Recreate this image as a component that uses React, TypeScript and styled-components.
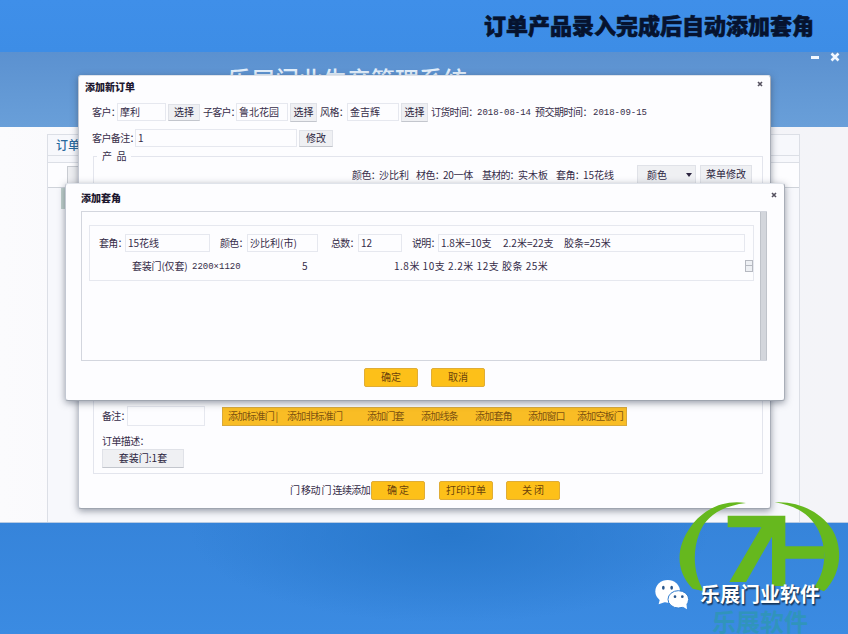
import React from "react";
import styled, { createGlobalStyle } from "styled-components";

const Global = createGlobalStyle`
  * { box-sizing: border-box; }
  body { margin: 0; font-family: "Noto Sans CJK SC", "Liberation Sans", sans-serif; }
`;

const Desktop = styled.div`
  position: relative;
  width: 848px;
  height: 634px;
  overflow: hidden;
  display: flex;
  flex-direction: column;
  background: #3d8de3;
`;

const Banner = styled.header`
  height: 52px;
  flex: none;
  display: flex;
  justify-content: flex-end;
  align-items: center;
  padding: 0 34px 5px 0;
  background: linear-gradient(#3f8fe9, #3d8de6);
`;

const BannerTitle = styled.h1`
  margin: 0;
  font-size: 22px;
  line-height: 30px;
  font-weight: 900;
  color: #06132f;
  -webkit-text-stroke: 0.6px #06132f;
  white-space: nowrap;
`;

const AppHeader = styled.div`
  height: 75px;
  flex: none;
  display: flex;
  justify-content: space-between;
  background: linear-gradient(#5b91d0, #699fd9);
`;

const AppName = styled.div`
  margin: 12px 0 0 227px;
  font-size: 24px;
  line-height: 30px;
  font-weight: 500;
  color: #e3f0fc;
  white-space: nowrap;
`;

const WindowControls = styled.div`
  display: flex;
  align-items: flex-start;
  gap: 10px;
  padding: 0 8px 0 0;
`;

const AppBody = styled.div`
  height: 396px;
  flex: none;
  display: flex;
  padding: 7px 48px 0 47px;
  background: linear-gradient(90deg, #fbfbfd, #f3f4f9 50%, #f4f4f8);
  border-bottom: 1px solid #b8cbe3;
`;

const Workspace = styled.div`
  flex: 1;
  display: flex;
  flex-direction: column;
  border: 1px solid #dcdfe6;
  border-bottom: 0;
  background: #f7f8fc;
`;

const TabStrip = styled.div`
  height: 21px;
  padding: 0 8px;
  font-size: 12px;
  line-height: 20px;
  color: #28689c;
  font-weight: 500;
  border-bottom: 1px solid #dcdfe6;
`;

const ToolStrip = styled.div`
  height: 26px;
  margin-top: 6px;
  padding: 3px 0 0 19px;
  border-top: 1px solid #dcdfe6;
  border-bottom: 1px solid #cfd3da;
  background: #fdfdff;
`;

const ToolButton = styled.div`
  width: 26px;
  height: 18px;
  border: 1px solid #c9ccd2;
  background: #eeeff2;
`;

const Marker = styled.div`
  width: 4px;
  height: 21px;
  margin: 0 0 0 13px;
  background: #bfd0cb;
`;

const Ground = styled.div`
  flex: 1;
  background:
    radial-gradient(ellipse 260px 90px at 450px 10px, #2878cc 0%, rgba(40, 120, 204, 0) 100%),
    linear-gradient(180deg, #3684da, #3b8be2);
`;

const Dialog = styled.section<{ $x: number; $y: number; $w: number; $h: number }>`
  position: absolute;
  left: ${(p) => p.$x}px;
  top: ${(p) => p.$y}px;
  width: ${(p) => p.$w}px;
  height: ${(p) => p.$h}px;
  display: flex;
  flex-direction: column;
  background: #fdfdff;
  border: 1px solid;
  border-radius: 3px;
  border-color: #dfe3ea #a9aeb8 #9fa5af #c3c8d2;
  box-shadow: 0 2px 7px rgba(50, 60, 80, 0.5);
  font-size: 10px;
  color: #352c48;
`;

const TitleBar = styled.div<{ $h: number; $pad: string }>`
  height: ${(p) => p.$h}px;
  flex: none;
  display: flex;
  justify-content: space-between;
  align-items: flex-start;
  padding: ${(p) => p.$pad};
  font-weight: 900;
  line-height: 12px;
  color: #1e1830;
`;

const CloseMark = styled.svg`
  width: 6px;
  height: 6px;
  stroke: #55515f;
  stroke-width: 1.6;
`;

const Row = styled.div<{ $h: number; $pl?: number; $mt?: number }>`
  height: ${(p) => p.$h}px;
  margin-top: ${(p) => p.$mt ?? 0}px;
  padding-left: ${(p) => p.$pl ?? 0}px;
  flex: none;
  display: flex;
  align-items: center;
`;

const Label = styled.span<{ $w: number; $ml?: number; $ls?: number }>`
  width: ${(p) => p.$w}px;
  margin-left: ${(p) => p.$ml ?? 0}px;
  letter-spacing: ${(p) => p.$ls ?? 0}px;
  flex: none;
  line-height: 14px;
  white-space: pre;
`;

const DateText = styled(Label)`
  font-family: "Liberation Mono", monospace;
  font-size: 9px;
  padding-top: 1px;
`;

const Field = styled.div<{ $w: number; $ml?: number; $h?: number }>`
  width: ${(p) => p.$w}px;
  height: ${(p) => p.$h ?? 18}px;
  margin-left: ${(p) => p.$ml ?? 0}px;
  flex: none;
  display: flex;
  align-items: center;
  padding: 0 0 1px 2px;
  border: 1px solid #e6e8ef;
  line-height: 14px;
  white-space: pre;
  overflow: hidden;
`;

const GreyButton = styled.button<{ $w: number; $ml?: number; $h?: number }>`
  width: ${(p) => p.$w}px;
  height: ${(p) => p.$h ?? 17}px;
  margin: 0 0 0 ${(p) => p.$ml ?? 0}px;
  flex: none;
  display: flex;
  align-items: center;
  justify-content: center;
  padding: 0 0 1px;
  border: 1px solid #e0e2e8;
  border-bottom-color: #c3c6cd;
  background: #eff0f3;
  font: inherit;
  line-height: 14px;
  color: #2c2540;
  white-space: nowrap;
`;

const SelectBox = styled(GreyButton)`
  justify-content: space-between;
  padding: 0 3px 0 9px;
`;

const FieldSet = styled.div`
  height: 318px;
  margin: 5px 7px 0 14px;
  display: flex;
  flex-direction: column;
  border: 1px solid #e3e5ed;
`;

const Legend = styled.div`
  width: 34px;
  height: 14px;
  flex: none;
  margin: -8px 0 0 3px;
  padding-left: 5px;
  line-height: 14px;
  background: #fdfdff;
`;

const CoveredArea = styled.div`
  height: 216px;
  flex: none;
`;

const AddBar = styled.div`
  width: 405px;
  height: 19px;
  margin-left: 17px;
  display: flex;
  align-items: center;
  background: #f9bd25;
  border: 1px solid #d9a93a;
  color: #7d5310;
`;

const YellowButton = styled.button<{ $ml?: number }>`
  width: 54px;
  height: 19px;
  flex: none;
  margin: 0 0 0 ${(p) => p.$ml ?? 0}px;
  padding: 0;
  border: 1px solid #e0ad36;
  border-radius: 2px;
  background: #fdc019;
  font: inherit;
  line-height: 16px;
  color: #6b430b;
  white-space: nowrap;
`;

const ScrollPanel = styled.div`
  width: 686px;
  height: 150px;
  margin-left: 15px;
  display: flex;
  justify-content: space-between;
  flex: none;
  border: 1px solid #d3d6de;
  border-right: 0;
`;

const ScrollTrack = styled.div`
  width: 7px;
  background: #d3d6dc;
  border-left: 1px solid #bfc3ca;
  border-right: 1px solid #bfc3ca;
`;

const ItemGroup = styled.div`
  width: 665px;
  height: 56px;
  margin: 13px 0 0 7px;
  border: 1px solid #e6e8ef;
`;

const Spinner = styled.div`
  width: 8px;
  height: 12px;
  margin-left: auto;
  border: 1px solid #b6b9c1;
  background: linear-gradient(#eef0f4 45%, #b6b9c1 45% 55%, #eef0f4 55%);
`;

const LogoArt = styled.svg`
  position: absolute;
  left: 620px;
  top: 480px;
  width: 228px;
  height: 154px;
`;

const LogoShade = styled.div`
  position: absolute;
  left: 712px;
  top: 609px;
  font-size: 24px;
  line-height: 24px;
  font-weight: 700;
  color: rgba(38, 158, 150, 0.5);
  white-space: nowrap;
`;

const BrandName = styled.div`
  position: absolute;
  left: 700px;
  top: 580px;
  font-size: 20px;
  line-height: 28px;
  font-weight: 700;
  color: #fff;
  text-shadow: 1px 1px 1px #17375c, 1px 2px 1px rgba(20, 40, 70, 0.6);
  white-space: nowrap;
`;

const Close = () => (
  <CloseMark viewBox="0 0 6 6">
    <path d="M1 1l4 4M5 1L1 5" />
  </CloseMark>
);

const additions: Array<[string, number, number]> = [
  ["添加标准门 |", 5, 59],
  ["添加非标准门", 0, 80],
  ["添加门套", 0, 54],
  ["添加线条", 0, 54],
  ["添加套角", 0, 53],
  ["添加窗口", 0, 49],
  ["添加空板门", 0, 48],
];

function OrderDialog() {
  return (
    <Dialog $x={78} $y={75} $w={693} $h={434}>
      <TitleBar $h={23} $pad="5px 7px 0 6px">
        <span>添加新订单</span>
        <Close />
      </TitleBar>
      <Row $h={26} $pl={13}>
        <Label $w={27} $ls={-0.6}>客户：</Label>
        <Field $w={49} $ml={-2}>摩利</Field>
        <GreyButton $w={32} $ml={2}>选择</GreyButton>
        <Label $w={34} $ml={3} $ls={-0.8}>子客户：</Label>
        <Field $w={52} $ml={-1}>鲁北花园</Field>
        <GreyButton $w={27} $ml={2} $h={19}>选择</GreyButton>
        <Label $w={27} $ml={3} $ls={-0.6}>风格：</Label>
        <Field $w={52}>金吉辉</Field>
        <GreyButton $w={27} $ml={2} $h={19}>选择</GreyButton>
        <Label $w={46} $ml={3} $ls={-0.7}>订货时间：</Label>
        <DateText $w={56}>2018-08-14</DateText>
        <Label $w={55} $ml={2} $ls={-0.5}>预交期时间：</Label>
        <DateText $w={56} $ml={3}>2018-09-15</DateText>
      </Row>
      <Row $h={26} $pl={13}>
        <Label $w={43} $ls={-0.6}>客户备注：</Label>
        <Field $w={162}>1</Field>
        <GreyButton $w={34} $ml={2}>修改</GreyButton>
      </Row>
      <FieldSet>
        <Legend>产&nbsp; 品</Legend>
        <Row $h={19} $mt={2} $pl={258}>
          <Label $w={27} $ls={-0.6}>颜色：</Label>
          <Label $w={37}>沙比利</Label>
          <Label $w={27} $ls={-0.6}>材色：</Label>
          <Label $w={39} $ls={-0.3}>20一体</Label>
          <Label $w={36} $ls={-0.8}>基材的：</Label>
          <Label $w={38}>实木板</Label>
          <Label $w={27} $ls={-0.6}>套角：</Label>
          <Label $w={54}>15花线</Label>
          <SelectBox $w={59} $h={19}>
            <span>颜色</span>
            <svg width="6" height="4" viewBox="0 0 6 4">
              <path d="M0 0h6L3 4z" fill="#2c2540" />
            </svg>
          </SelectBox>
          <GreyButton $w={52} $ml={4} $h={19}>菜单修改</GreyButton>
        </Row>
        <CoveredArea />
        <Row $h={20} $mt={6} $pl={8}>
          <Label $w={25} $ls={-0.7}>备注：</Label>
          <Field $w={78} $h={20} />
          <AddBar>
            {additions.map(([text, ml, w]) => (
              <Label key={text} $ml={ml} $w={w} $ls={-0.8}>
                {text}
              </Label>
            ))}
          </AddBar>
        </Row>
        <Row $h={16} $mt={7} $pl={8}>
          <Label $w={50} $ls={-0.6}>订单描述：</Label>
        </Row>
        <Row $h={20} $mt={-1} $pl={8}>
          <GreyButton $w={82} $h={19}>套装门:1套</GreyButton>
        </Row>
      </FieldSet>
      <Row $h={20} $mt={6} $pl={211}>
        <Label $w={81} $ls={-0.6}>门 移动 门 连续添加</Label>
        <YellowButton>确 定</YellowButton>
        <YellowButton $ml={14}>打印订单</YellowButton>
        <YellowButton $ml={13}>关 闭</YellowButton>
      </Row>
    </Dialog>
  );
}

function CornerDialog() {
  return (
    <Dialog $x={65} $y={183} $w={720} $h={218}>
      <TitleBar $h={27} $pad="8px 7px 0 15px">
        <span>添加套角</span>
        <Close />
      </TitleBar>
      <ScrollPanel>
        <ItemGroup>
          <Row $h={20} $mt={7} $pl={9}>
            <Label $w={26} $ls={-0.7}>套角：</Label>
            <Field $w={85}>15花线</Field>
            <Label $w={27} $ml={10} $ls={-0.7}>颜色：</Label>
            <Field $w={71}>沙比利(市)</Field>
            <Label $w={27} $ml={13} $ls={-0.7}>总数：</Label>
            <Field $w={44}>12</Field>
            <Label $w={26} $ml={10} $ls={-0.7}>说明：</Label>
            <Field $w={307}>
              <Label $w={62}>1.8米=10支</Label>
              <Label $w={61}>2.2米=22支</Label>
              <Label $w={60}>胶条=25米</Label>
            </Field>
          </Row>
          <Row $h={20} $mt={3} $pl={42}>
            <Label $w={60} $ls={-0.2}>套装门(仅套)</Label>
            <DateText $w={110}>2200×1120</DateText>
            <Label $w={92}>5</Label>
            <Label $w={170} $ls={0.5}>1.8米 10支 2.2米 12支 胶条 25米</Label>
            <Spinner />
          </Row>
        </ItemGroup>
        <ScrollTrack />
      </ScrollPanel>
      <Row $h={20} $mt={6} $pl={298}>
        <YellowButton>确定</YellowButton>
        <YellowButton $ml={13}>取消</YellowButton>
      </Row>
    </Dialog>
  );
}

function Brand() {
  return (
    <>
      <LogoShade>乐展软件</LogoShade>
      <LogoArt viewBox="0 0 684 462">
        <g fill="#66b81e">
          <path d="M378 69C310 58 250 88 212 140C165 205 168 275 218 326L252 334C222 286 215 220 238 160C259 105 308 78 378 69Z" />
          <path d="M464 67C535 62 602 96 636 148C672 207 662 286 612 334L582 322C618 274 622 207 596 152C570 100 524 76 464 67Z" />
          <path d="M323 107H496V199H612V236H496V318H456V170L378 306H328L424 142H323Z" />
        </g>
        <g fill="#fff">
          <ellipse cx="143" cy="334" rx="37" ry="34" />
          <path d="M120 356l-4 17 22-8z" />
          <ellipse cx="175" cy="358" rx="31" ry="26" stroke="#347fd0" strokeWidth="3" />
          <path d="M186 379l15 9-2-20z" />
        </g>
        <g fill="#28568c">
          <ellipse cx="130" cy="323" rx="4" ry="6" />
          <ellipse cx="155" cy="323" rx="4" ry="6" />
          <circle cx="165" cy="350" r="4" />
          <circle cx="187" cy="350" r="4" />
        </g>
      </LogoArt>
      <BrandName>乐展门业软件</BrandName>
    </>
  );
}

export default function App() {
  return (
    <>
      <Global />
      <Desktop>
        <Banner>
          <BannerTitle>订单产品录入完成后自动添加套角</BannerTitle>
        </Banner>
        <AppHeader>
          <AppName>乐展门业生产管理系统</AppName>
          <WindowControls>
            <svg width="10" height="10" viewBox="0 0 10 10">
              <path d="M1 5.5h8" stroke="#f2f8ff" strokeWidth="3" />
            </svg>
            <svg width="10" height="10" viewBox="0 0 10 10">
              <path d="M1.5 1.5l7 7M8.5 1.5l-7 7" stroke="#f2f8ff" strokeWidth="2.6" />
            </svg>
          </WindowControls>
        </AppHeader>
        <AppBody>
          <Workspace>
            <TabStrip>订单</TabStrip>
            <ToolStrip>
              <ToolButton />
            </ToolStrip>
            <Marker />
          </Workspace>
        </AppBody>
        <Ground />
        <OrderDialog />
        <CornerDialog />
        <Brand />
      </Desktop>
    </>
  );
}
